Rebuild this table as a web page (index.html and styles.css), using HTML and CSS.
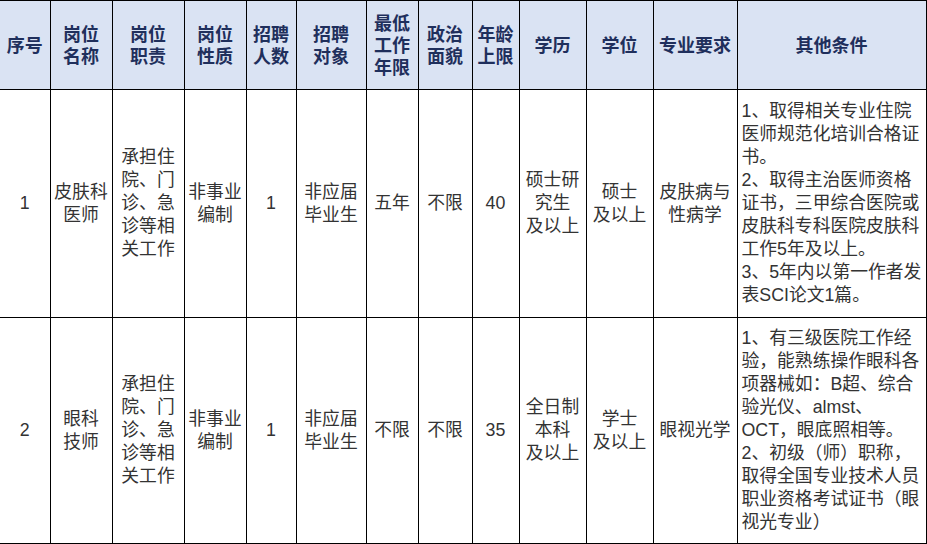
FILE: index.html
```html
<!DOCTYPE html>
<html lang="zh-CN">
<head>
<meta charset="utf-8">
<title>招聘岗位</title>
<link rel="stylesheet" href="styles.css">
</head>
<body>
<table class="jobs">
  <colgroup>
    <col class="c1"><col class="c2"><col class="c3"><col class="c4"><col class="c5"><col class="c6"><col class="c7"><col class="c8"><col class="c9"><col class="c10"><col class="c11"><col class="c12"><col class="c13">
  </colgroup>
  <thead>
    <tr class="head">
      <th>序号</th>
      <th>岗位<br>名称</th>
      <th>岗位<br>职责</th>
      <th>岗位<br>性质</th>
      <th>招聘<br>人数</th>
      <th>招聘<br>对象</th>
      <th>最低<br>工作<br>年限</th>
      <th>政治<br>面貌</th>
      <th>年龄<br>上限</th>
      <th>学历</th>
      <th>学位</th>
      <th>专业要求</th>
      <th>其他条件</th>
    </tr>
  </thead>
  <tbody>
    <tr class="r1">
      <td>1</td>
      <td>皮肤科<br>医师</td>
      <td>承担住<br>院、门<br>诊、急<br>诊等相<br>关工作</td>
      <td>非事业<br>编制</td>
      <td>1</td>
      <td>非应届<br>毕业生</td>
      <td>五年</td>
      <td>不限</td>
      <td>40</td>
      <td>硕士研<br>究生<br>及以上</td>
      <td>硕士<br>及以上</td>
      <td>皮肤病与<br>性病学</td>
      <td class="other">1、取得相关专业住院<br>医师规范化培训合格证<br>书。<br>2、取得主治医师资格<br>证书，三甲综合医院或<br>皮肤科专科医院皮肤科<br>工作5年及以上。<br>3、5年内以第一作者发<br>表SCI论文1篇。</td>
    </tr>
    <tr class="r2">
      <td>2</td>
      <td>眼科<br>技师</td>
      <td>承担住<br>院、门<br>诊、急<br>诊等相<br>关工作</td>
      <td>非事业<br>编制</td>
      <td>1</td>
      <td>非应届<br>毕业生</td>
      <td>不限</td>
      <td>不限</td>
      <td>35</td>
      <td>全日制<br>本科<br>及以上</td>
      <td>学士<br>及以上</td>
      <td>眼视光学</td>
      <td class="other">1、有三级医院工作经<br>验，能熟练操作眼科各<br>项器械如：B超、综合<br>验光仪、almst、<br>OCT，眼底照相等。<br>2、初级（师）职称，<br>取得全国专业技术人员<br>职业资格考试证书（眼<br>视光专业）</td>
    </tr>
  </tbody>
</table>
</body>
</html>
```

FILE: styles.css
```css
html, body {
  margin: 0;
  padding: 0;
  background: #ffffff;
}

.jobs {
  border-collapse: collapse;
  table-layout: fixed;
  width: 926px;
  font-family: "Liberation Sans", "Noto Sans CJK SC", sans-serif;
}

.c1 { width: 50px; }
.c2 { width: 62px; }
.c3 { width: 72px; }
.c4 { width: 62px; }
.c5 { width: 50px; }
.c6 { width: 70px; }
.c7 { width: 52px; }
.c8 { width: 54px; }
.c9 { width: 47px; }
.c10 { width: 67px; }
.c11 { width: 67px; }
.c12 { width: 84px; }
.c13 { width: 189px; }

.jobs th,
.jobs td {
  border: 1px solid #000000;
  padding: 0;
  text-align: center;
  vertical-align: middle;
  white-space: nowrap;
  overflow: hidden;
}

.jobs th:first-child,
.jobs td:first-child {
  border-left: none;
}

.head th {
  background: #dae3f3;
  color: #1f2f5c;
  font-family: "Noto Sans CJK SC", sans-serif;
  font-weight: 700;
  font-size: 18px;
  line-height: 21.7px;
  height: 88px;
}

.jobs td {
  color: #333333;
  font-size: 17.8px;
  line-height: 23px;
}

.r1 td { height: 227px; }
.r2 td { height: 225px; }

.jobs td.other {
  text-align: left;
  padding-left: 4px;
}
```
